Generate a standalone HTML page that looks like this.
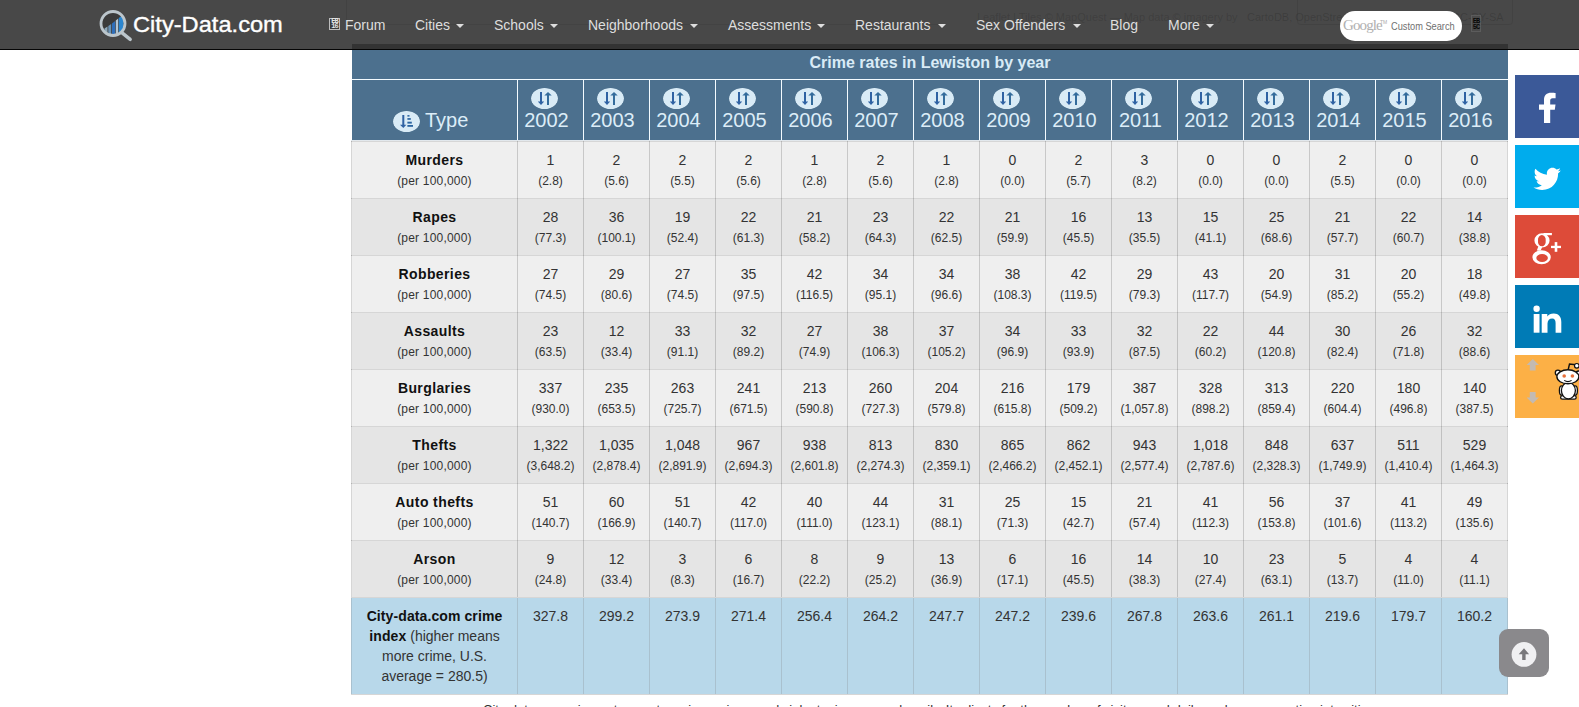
<!DOCTYPE html><html><head><meta charset="utf-8"><style>
html,body{margin:0;padding:0;}
body{width:1579px;height:707px;overflow:hidden;position:relative;background:#fff;font-family:"Liberation Sans",sans-serif;}
#nav{position:absolute;left:0;top:0;width:1579px;height:49px;background:#484848;border-bottom:1px solid #050505;color:#dedede;font-size:14px;}
#nav .it{position:absolute;top:18px;line-height:14px;white-space:nowrap;}
#nav .car{position:absolute;top:24px;width:0;height:0;border-top:4px solid #dedede;border-left:4px solid transparent;border-right:4px solid transparent;}
#logo{position:absolute;left:133px;top:14px;font-size:22px;line-height:22px;color:#fff;white-space:nowrap;-webkit-text-stroke:0.35px #fff;transform:scaleX(1.075);transform-origin:0 0;}
#search{position:absolute;left:1340px;top:11px;width:122px;height:30px;border-radius:15px;background:#fff;}
#band{position:absolute;left:352px;top:44px;width:1156px;height:5px;background:#333;}
#cap{position:absolute;left:352px;top:50px;width:1156px;height:29px;background:#4c708e;color:#d9ebf6;font-weight:bold;font-size:16px;line-height:25px;text-align:center;}
#capline{position:absolute;left:351px;top:79px;width:1157px;height:1px;background:#f4fbff;}
#head{position:absolute;left:352px;top:80px;width:1156px;height:60px;background:#4c708e;color:#dcedf8;}
#headline{position:absolute;left:351px;top:140px;width:1157px;height:1px;background:#e2e8ed;}
.wv{position:absolute;top:0;width:1px;height:60px;background:#f4fbff;}
.yh{position:absolute;top:0;width:66px;height:60px;}
.pill{position:absolute;width:27px;height:21px;border-radius:50%;background:#d9ebf6;}
.yh .pill{left:14px;top:8px;}
.yt{position:absolute;left:0;width:59px;top:30px;line-height:20px;font-size:20px;text-align:center;}
#tpill{left:41px;top:30px;}
#ttxt{position:absolute;left:73px;top:30px;line-height:20px;font-size:20px;}
.row{position:absolute;left:352px;width:1155px;height:56px;}
.odd{background:#efefef;}
.even{background:#e5e5e5;}
.idx{height:96px;background:#b8d8ea;}
.cell{position:absolute;top:0;width:65px;height:48px;padding-top:8px;text-align:center;line-height:20px;font-size:14px;color:#333;}
.lab{color:#333;}
.lab b{color:#111;letter-spacing:0.4px;}
.lab .sub{letter-spacing:0.2px;}
.idx .lab{width:149px!important;padding-left:8px;padding-right:8px;}
.idx .lab b{letter-spacing:0.1px;}
.sub{font-size:12px;}
.gh{position:absolute;left:351px;width:1157px;height:1px;background:rgba(0,0,0,0.16);}
.gv{position:absolute;top:141px;height:456px;width:1px;background:rgba(0,0,0,0.16);}
.gvi{position:absolute;top:598px;height:96px;width:1px;background:#a9c1cf;}
.soc{position:absolute;left:1515px;width:64px;height:63px;}
#totop{position:absolute;left:1499px;top:629px;width:50px;height:48px;border-radius:9px;background:#8a898c;}
#foot{position:absolute;left:483px;top:703px;font-size:13px;line-height:13px;color:#333;white-space:nowrap;}

</style></head><body>
<div id="nav">
<div style="position:absolute;left:977px;top:12px;font-size:11px;line-height:11px;color:rgba(0,0,0,0.14);white-space:nowrap">Leaflet | Tiles &copy; MapQuest &mdash; Map data &copy; imagery by</div><div style="position:absolute;left:1247px;top:12px;font-size:11px;line-height:11px;color:rgba(0,0,0,0.16);white-space:nowrap">CartoDB, OpenStreetMap</div><div style="position:absolute;left:1452px;top:12px;font-size:11px;line-height:11px;color:rgba(0,0,0,0.16);white-space:nowrap">CC-BY-SA</div><div style="position:absolute;left:1297px;top:0;width:216px;height:25px;border:1px solid rgba(0,0,0,0.07);border-top:none;box-sizing:border-box;border-radius:0 0 4px 4px"></div><div style="position:absolute;left:346px;top:0;width:1px;height:25px;background:rgba(0,0,0,0.07)"></div><div style="position:absolute;left:346px;top:24px;width:600px;height:1px;background:rgba(0,0,0,0.06)"></div><svg style="position:absolute;left:98px;top:8px" width="36" height="34" viewBox="0 0 36 34">
<defs><clipPath id="lc"><circle cx="15" cy="15.5" r="11.5"/></clipPath></defs>
<circle cx="15" cy="15.5" r="12" fill="#3b3b3b"/>
<g clip-path="url(#lc)">
<path d="M6.5 28 V20.5 L9.5 18.6 V28 Z" fill="#8ea9bb"/>
<path d="M10.3 28 V18.1 L13.2 16 V28 Z" fill="#6b93b5"/>
<path d="M14 28 V15.4 L17.2 12.9 V28 Z" fill="#2f6fba"/>
<path d="M17.8 28 V12.4 L20.2 10.5 V28 Z" fill="#b3c6d4"/>
<path d="M20.8 28 V10 L25.5 6.5 V28 Z" fill="#2a86d0"/>
</g>
<circle cx="15" cy="15.5" r="12" fill="none" stroke="#bcc6cc" stroke-width="2.8"/>
<path d="M23.8 24.6 L32.2 31.4" stroke="#bcc6cc" stroke-width="3.4" stroke-linecap="round"/>
</svg>
<div id="logo">City-Data.com</div>
<div style="position:absolute;left:329px;top:18px;width:11px;height:12px;border:1px solid #bdbdbd;box-sizing:border-box;background:#3c3c3c;font-family:'Liberation Mono',monospace;font-size:7px;line-height:5px;color:#e6e6e6;font-weight:bold;text-align:center;padding-top:0px;letter-spacing:-1px">EB<br>16</div>
<div class="it" style="left:345px">Forum</div>
<div class="it" style="left:415px">Cities</div><div class="car" style="left:456px"></div>
<div class="it" style="left:494px">Schools</div><div class="car" style="left:550px"></div>
<div class="it" style="left:588px">Neighborhoods</div><div class="car" style="left:690px"></div>
<div class="it" style="left:728px">Assessments</div><div class="car" style="left:817px"></div>
<div class="it" style="left:855px">Restaurants</div><div class="car" style="left:938px"></div>
<div class="it" style="left:976px">Sex Offenders</div><div class="car" style="left:1073px"></div>
<div class="it" style="left:1110px">Blog</div>
<div class="it" style="left:1168px">More</div><div class="car" style="left:1206px"></div>
<div id="search"><span style="position:absolute;left:3px;top:7px;font-family:'Liberation Serif',serif;font-size:15px;line-height:15px;color:#b0b0b0;letter-spacing:-0.9px;white-space:nowrap">Google</span><span style="position:absolute;left:40px;top:9px;font-size:5px;line-height:5px;color:#aaa">TM</span><span style="position:absolute;left:51px;top:9.5px;font-size:11px;line-height:11px;color:#707070;white-space:nowrap;transform:scaleX(0.84);transform-origin:0 0">Custom Search</span></div>
<div style="position:absolute;left:1471px;top:15px;width:10px;height:17px;background:#4a4a4a;border:1px solid #5c5c5c;box-sizing:border-box;font-family:'Liberation Mono',monospace;font-size:7px;line-height:6px;color:#080808;font-weight:bold;text-align:center;padding-top:2px;letter-spacing:-1px">EB<br>5C</div>

</div>
<div id="band"></div>
<div id="cap">Crime rates in Lewiston by year</div>
<div id="capline"></div>
<div id="head">
<svg class="pill" id="tpill" viewBox="0 0 27 21" width="27" height="21" style="background:none;top:31px"><rect x="0" y="0" width="27" height="21" rx="12" ry="10.5" fill="#d9ebf6"/><rect x="9.3" y="4" width="2" height="11" fill="#2f62a3"/><path d="M7 13.8 H13.4 L10.3 17 Z" fill="#2f62a3"/><rect x="14.4" y="4.1" width="2.1" height="1.5" fill="#2a64a0"/><rect x="14.4" y="7.1" width="3.4" height="1.7" fill="#2a64a0"/><rect x="14.4" y="10.7" width="4.4" height="1.9" fill="#2a64a0"/><rect x="14.4" y="14" width="5.6" height="1.8" fill="#2a64a0"/></svg><span id="ttxt">Type</span>

<div class="yh" style="left:165px"><svg class="pill" viewBox="0 0 27 21" width="27" height="21" style="background:none"><rect x="0" y="0" width="27" height="21" rx="12" ry="10.5" fill="#d9ebf6"/><rect x="9" y="4" width="2" height="11" fill="#2f62a3"/><path d="M6.8 13.6 H13.2 L10 17 Z" fill="#2f62a3"/><rect x="16" y="6.5" width="2" height="10.5" fill="#346c9c"/><path d="M13.3 7.6 H20.7 L17 4 Z" fill="#346c9c"/></svg>
<span class="yt">2002</span></div>
<div class="yh" style="left:231px"><svg class="pill" viewBox="0 0 27 21" width="27" height="21" style="background:none"><rect x="0" y="0" width="27" height="21" rx="12" ry="10.5" fill="#d9ebf6"/><rect x="9" y="4" width="2" height="11" fill="#2f62a3"/><path d="M6.8 13.6 H13.2 L10 17 Z" fill="#2f62a3"/><rect x="16" y="6.5" width="2" height="10.5" fill="#346c9c"/><path d="M13.3 7.6 H20.7 L17 4 Z" fill="#346c9c"/></svg>
<span class="yt">2003</span></div>
<div class="yh" style="left:297px"><svg class="pill" viewBox="0 0 27 21" width="27" height="21" style="background:none"><rect x="0" y="0" width="27" height="21" rx="12" ry="10.5" fill="#d9ebf6"/><rect x="9" y="4" width="2" height="11" fill="#2f62a3"/><path d="M6.8 13.6 H13.2 L10 17 Z" fill="#2f62a3"/><rect x="16" y="6.5" width="2" height="10.5" fill="#346c9c"/><path d="M13.3 7.6 H20.7 L17 4 Z" fill="#346c9c"/></svg>
<span class="yt">2004</span></div>
<div class="yh" style="left:363px"><svg class="pill" viewBox="0 0 27 21" width="27" height="21" style="background:none"><rect x="0" y="0" width="27" height="21" rx="12" ry="10.5" fill="#d9ebf6"/><rect x="9" y="4" width="2" height="11" fill="#2f62a3"/><path d="M6.8 13.6 H13.2 L10 17 Z" fill="#2f62a3"/><rect x="16" y="6.5" width="2" height="10.5" fill="#346c9c"/><path d="M13.3 7.6 H20.7 L17 4 Z" fill="#346c9c"/></svg>
<span class="yt">2005</span></div>
<div class="yh" style="left:429px"><svg class="pill" viewBox="0 0 27 21" width="27" height="21" style="background:none"><rect x="0" y="0" width="27" height="21" rx="12" ry="10.5" fill="#d9ebf6"/><rect x="9" y="4" width="2" height="11" fill="#2f62a3"/><path d="M6.8 13.6 H13.2 L10 17 Z" fill="#2f62a3"/><rect x="16" y="6.5" width="2" height="10.5" fill="#346c9c"/><path d="M13.3 7.6 H20.7 L17 4 Z" fill="#346c9c"/></svg>
<span class="yt">2006</span></div>
<div class="yh" style="left:495px"><svg class="pill" viewBox="0 0 27 21" width="27" height="21" style="background:none"><rect x="0" y="0" width="27" height="21" rx="12" ry="10.5" fill="#d9ebf6"/><rect x="9" y="4" width="2" height="11" fill="#2f62a3"/><path d="M6.8 13.6 H13.2 L10 17 Z" fill="#2f62a3"/><rect x="16" y="6.5" width="2" height="10.5" fill="#346c9c"/><path d="M13.3 7.6 H20.7 L17 4 Z" fill="#346c9c"/></svg>
<span class="yt">2007</span></div>
<div class="yh" style="left:561px"><svg class="pill" viewBox="0 0 27 21" width="27" height="21" style="background:none"><rect x="0" y="0" width="27" height="21" rx="12" ry="10.5" fill="#d9ebf6"/><rect x="9" y="4" width="2" height="11" fill="#2f62a3"/><path d="M6.8 13.6 H13.2 L10 17 Z" fill="#2f62a3"/><rect x="16" y="6.5" width="2" height="10.5" fill="#346c9c"/><path d="M13.3 7.6 H20.7 L17 4 Z" fill="#346c9c"/></svg>
<span class="yt">2008</span></div>
<div class="yh" style="left:627px"><svg class="pill" viewBox="0 0 27 21" width="27" height="21" style="background:none"><rect x="0" y="0" width="27" height="21" rx="12" ry="10.5" fill="#d9ebf6"/><rect x="9" y="4" width="2" height="11" fill="#2f62a3"/><path d="M6.8 13.6 H13.2 L10 17 Z" fill="#2f62a3"/><rect x="16" y="6.5" width="2" height="10.5" fill="#346c9c"/><path d="M13.3 7.6 H20.7 L17 4 Z" fill="#346c9c"/></svg>
<span class="yt">2009</span></div>
<div class="yh" style="left:693px"><svg class="pill" viewBox="0 0 27 21" width="27" height="21" style="background:none"><rect x="0" y="0" width="27" height="21" rx="12" ry="10.5" fill="#d9ebf6"/><rect x="9" y="4" width="2" height="11" fill="#2f62a3"/><path d="M6.8 13.6 H13.2 L10 17 Z" fill="#2f62a3"/><rect x="16" y="6.5" width="2" height="10.5" fill="#346c9c"/><path d="M13.3 7.6 H20.7 L17 4 Z" fill="#346c9c"/></svg>
<span class="yt">2010</span></div>
<div class="yh" style="left:759px"><svg class="pill" viewBox="0 0 27 21" width="27" height="21" style="background:none"><rect x="0" y="0" width="27" height="21" rx="12" ry="10.5" fill="#d9ebf6"/><rect x="9" y="4" width="2" height="11" fill="#2f62a3"/><path d="M6.8 13.6 H13.2 L10 17 Z" fill="#2f62a3"/><rect x="16" y="6.5" width="2" height="10.5" fill="#346c9c"/><path d="M13.3 7.6 H20.7 L17 4 Z" fill="#346c9c"/></svg>
<span class="yt">2011</span></div>
<div class="yh" style="left:825px"><svg class="pill" viewBox="0 0 27 21" width="27" height="21" style="background:none"><rect x="0" y="0" width="27" height="21" rx="12" ry="10.5" fill="#d9ebf6"/><rect x="9" y="4" width="2" height="11" fill="#2f62a3"/><path d="M6.8 13.6 H13.2 L10 17 Z" fill="#2f62a3"/><rect x="16" y="6.5" width="2" height="10.5" fill="#346c9c"/><path d="M13.3 7.6 H20.7 L17 4 Z" fill="#346c9c"/></svg>
<span class="yt">2012</span></div>
<div class="yh" style="left:891px"><svg class="pill" viewBox="0 0 27 21" width="27" height="21" style="background:none"><rect x="0" y="0" width="27" height="21" rx="12" ry="10.5" fill="#d9ebf6"/><rect x="9" y="4" width="2" height="11" fill="#2f62a3"/><path d="M6.8 13.6 H13.2 L10 17 Z" fill="#2f62a3"/><rect x="16" y="6.5" width="2" height="10.5" fill="#346c9c"/><path d="M13.3 7.6 H20.7 L17 4 Z" fill="#346c9c"/></svg>
<span class="yt">2013</span></div>
<div class="yh" style="left:957px"><svg class="pill" viewBox="0 0 27 21" width="27" height="21" style="background:none"><rect x="0" y="0" width="27" height="21" rx="12" ry="10.5" fill="#d9ebf6"/><rect x="9" y="4" width="2" height="11" fill="#2f62a3"/><path d="M6.8 13.6 H13.2 L10 17 Z" fill="#2f62a3"/><rect x="16" y="6.5" width="2" height="10.5" fill="#346c9c"/><path d="M13.3 7.6 H20.7 L17 4 Z" fill="#346c9c"/></svg>
<span class="yt">2014</span></div>
<div class="yh" style="left:1023px"><svg class="pill" viewBox="0 0 27 21" width="27" height="21" style="background:none"><rect x="0" y="0" width="27" height="21" rx="12" ry="10.5" fill="#d9ebf6"/><rect x="9" y="4" width="2" height="11" fill="#2f62a3"/><path d="M6.8 13.6 H13.2 L10 17 Z" fill="#2f62a3"/><rect x="16" y="6.5" width="2" height="10.5" fill="#346c9c"/><path d="M13.3 7.6 H20.7 L17 4 Z" fill="#346c9c"/></svg>
<span class="yt">2015</span></div>
<div class="yh" style="left:1089px"><svg class="pill" viewBox="0 0 27 21" width="27" height="21" style="background:none"><rect x="0" y="0" width="27" height="21" rx="12" ry="10.5" fill="#d9ebf6"/><rect x="9" y="4" width="2" height="11" fill="#2f62a3"/><path d="M6.8 13.6 H13.2 L10 17 Z" fill="#2f62a3"/><rect x="16" y="6.5" width="2" height="10.5" fill="#346c9c"/><path d="M13.3 7.6 H20.7 L17 4 Z" fill="#346c9c"/></svg>
<span class="yt">2016</span></div>
<div class="wv" style="left:165px"></div>
<div class="wv" style="left:231px"></div>
<div class="wv" style="left:297px"></div>
<div class="wv" style="left:363px"></div>
<div class="wv" style="left:429px"></div>
<div class="wv" style="left:495px"></div>
<div class="wv" style="left:561px"></div>
<div class="wv" style="left:627px"></div>
<div class="wv" style="left:693px"></div>
<div class="wv" style="left:759px"></div>
<div class="wv" style="left:825px"></div>
<div class="wv" style="left:891px"></div>
<div class="wv" style="left:957px"></div>
<div class="wv" style="left:1023px"></div>
<div class="wv" style="left:1089px"></div>
</div>
<div id="headline"></div>
<div class="row odd" style="top:142px">
<div class="cell lab" style="left:0;width:165px"><b>Murders</b><br><span class="sub">(per 100,000)</span></div>
<div class="cell" style="left:166px">1<br><span class="sub">(2.8)</span></div>
<div class="cell" style="left:232px">2<br><span class="sub">(5.6)</span></div>
<div class="cell" style="left:298px">2<br><span class="sub">(5.5)</span></div>
<div class="cell" style="left:364px">2<br><span class="sub">(5.6)</span></div>
<div class="cell" style="left:430px">1<br><span class="sub">(2.8)</span></div>
<div class="cell" style="left:496px">2<br><span class="sub">(5.6)</span></div>
<div class="cell" style="left:562px">1<br><span class="sub">(2.8)</span></div>
<div class="cell" style="left:628px">0<br><span class="sub">(0.0)</span></div>
<div class="cell" style="left:694px">2<br><span class="sub">(5.7)</span></div>
<div class="cell" style="left:760px">3<br><span class="sub">(8.2)</span></div>
<div class="cell" style="left:826px">0<br><span class="sub">(0.0)</span></div>
<div class="cell" style="left:892px">0<br><span class="sub">(0.0)</span></div>
<div class="cell" style="left:958px">2<br><span class="sub">(5.5)</span></div>
<div class="cell" style="left:1024px">0<br><span class="sub">(0.0)</span></div>
<div class="cell" style="left:1090px">0<br><span class="sub">(0.0)</span></div>
</div>
<div class="row even" style="top:199px">
<div class="cell lab" style="left:0;width:165px"><b>Rapes</b><br><span class="sub">(per 100,000)</span></div>
<div class="cell" style="left:166px">28<br><span class="sub">(77.3)</span></div>
<div class="cell" style="left:232px">36<br><span class="sub">(100.1)</span></div>
<div class="cell" style="left:298px">19<br><span class="sub">(52.4)</span></div>
<div class="cell" style="left:364px">22<br><span class="sub">(61.3)</span></div>
<div class="cell" style="left:430px">21<br><span class="sub">(58.2)</span></div>
<div class="cell" style="left:496px">23<br><span class="sub">(64.3)</span></div>
<div class="cell" style="left:562px">22<br><span class="sub">(62.5)</span></div>
<div class="cell" style="left:628px">21<br><span class="sub">(59.9)</span></div>
<div class="cell" style="left:694px">16<br><span class="sub">(45.5)</span></div>
<div class="cell" style="left:760px">13<br><span class="sub">(35.5)</span></div>
<div class="cell" style="left:826px">15<br><span class="sub">(41.1)</span></div>
<div class="cell" style="left:892px">25<br><span class="sub">(68.6)</span></div>
<div class="cell" style="left:958px">21<br><span class="sub">(57.7)</span></div>
<div class="cell" style="left:1024px">22<br><span class="sub">(60.7)</span></div>
<div class="cell" style="left:1090px">14<br><span class="sub">(38.8)</span></div>
</div>
<div class="row odd" style="top:256px">
<div class="cell lab" style="left:0;width:165px"><b>Robberies</b><br><span class="sub">(per 100,000)</span></div>
<div class="cell" style="left:166px">27<br><span class="sub">(74.5)</span></div>
<div class="cell" style="left:232px">29<br><span class="sub">(80.6)</span></div>
<div class="cell" style="left:298px">27<br><span class="sub">(74.5)</span></div>
<div class="cell" style="left:364px">35<br><span class="sub">(97.5)</span></div>
<div class="cell" style="left:430px">42<br><span class="sub">(116.5)</span></div>
<div class="cell" style="left:496px">34<br><span class="sub">(95.1)</span></div>
<div class="cell" style="left:562px">34<br><span class="sub">(96.6)</span></div>
<div class="cell" style="left:628px">38<br><span class="sub">(108.3)</span></div>
<div class="cell" style="left:694px">42<br><span class="sub">(119.5)</span></div>
<div class="cell" style="left:760px">29<br><span class="sub">(79.3)</span></div>
<div class="cell" style="left:826px">43<br><span class="sub">(117.7)</span></div>
<div class="cell" style="left:892px">20<br><span class="sub">(54.9)</span></div>
<div class="cell" style="left:958px">31<br><span class="sub">(85.2)</span></div>
<div class="cell" style="left:1024px">20<br><span class="sub">(55.2)</span></div>
<div class="cell" style="left:1090px">18<br><span class="sub">(49.8)</span></div>
</div>
<div class="row even" style="top:313px">
<div class="cell lab" style="left:0;width:165px"><b>Assaults</b><br><span class="sub">(per 100,000)</span></div>
<div class="cell" style="left:166px">23<br><span class="sub">(63.5)</span></div>
<div class="cell" style="left:232px">12<br><span class="sub">(33.4)</span></div>
<div class="cell" style="left:298px">33<br><span class="sub">(91.1)</span></div>
<div class="cell" style="left:364px">32<br><span class="sub">(89.2)</span></div>
<div class="cell" style="left:430px">27<br><span class="sub">(74.9)</span></div>
<div class="cell" style="left:496px">38<br><span class="sub">(106.3)</span></div>
<div class="cell" style="left:562px">37<br><span class="sub">(105.2)</span></div>
<div class="cell" style="left:628px">34<br><span class="sub">(96.9)</span></div>
<div class="cell" style="left:694px">33<br><span class="sub">(93.9)</span></div>
<div class="cell" style="left:760px">32<br><span class="sub">(87.5)</span></div>
<div class="cell" style="left:826px">22<br><span class="sub">(60.2)</span></div>
<div class="cell" style="left:892px">44<br><span class="sub">(120.8)</span></div>
<div class="cell" style="left:958px">30<br><span class="sub">(82.4)</span></div>
<div class="cell" style="left:1024px">26<br><span class="sub">(71.8)</span></div>
<div class="cell" style="left:1090px">32<br><span class="sub">(88.6)</span></div>
</div>
<div class="row odd" style="top:370px">
<div class="cell lab" style="left:0;width:165px"><b>Burglaries</b><br><span class="sub">(per 100,000)</span></div>
<div class="cell" style="left:166px">337<br><span class="sub">(930.0)</span></div>
<div class="cell" style="left:232px">235<br><span class="sub">(653.5)</span></div>
<div class="cell" style="left:298px">263<br><span class="sub">(725.7)</span></div>
<div class="cell" style="left:364px">241<br><span class="sub">(671.5)</span></div>
<div class="cell" style="left:430px">213<br><span class="sub">(590.8)</span></div>
<div class="cell" style="left:496px">260<br><span class="sub">(727.3)</span></div>
<div class="cell" style="left:562px">204<br><span class="sub">(579.8)</span></div>
<div class="cell" style="left:628px">216<br><span class="sub">(615.8)</span></div>
<div class="cell" style="left:694px">179<br><span class="sub">(509.2)</span></div>
<div class="cell" style="left:760px">387<br><span class="sub">(1,057.8)</span></div>
<div class="cell" style="left:826px">328<br><span class="sub">(898.2)</span></div>
<div class="cell" style="left:892px">313<br><span class="sub">(859.4)</span></div>
<div class="cell" style="left:958px">220<br><span class="sub">(604.4)</span></div>
<div class="cell" style="left:1024px">180<br><span class="sub">(496.8)</span></div>
<div class="cell" style="left:1090px">140<br><span class="sub">(387.5)</span></div>
</div>
<div class="row even" style="top:427px">
<div class="cell lab" style="left:0;width:165px"><b>Thefts</b><br><span class="sub">(per 100,000)</span></div>
<div class="cell" style="left:166px">1,322<br><span class="sub">(3,648.2)</span></div>
<div class="cell" style="left:232px">1,035<br><span class="sub">(2,878.4)</span></div>
<div class="cell" style="left:298px">1,048<br><span class="sub">(2,891.9)</span></div>
<div class="cell" style="left:364px">967<br><span class="sub">(2,694.3)</span></div>
<div class="cell" style="left:430px">938<br><span class="sub">(2,601.8)</span></div>
<div class="cell" style="left:496px">813<br><span class="sub">(2,274.3)</span></div>
<div class="cell" style="left:562px">830<br><span class="sub">(2,359.1)</span></div>
<div class="cell" style="left:628px">865<br><span class="sub">(2,466.2)</span></div>
<div class="cell" style="left:694px">862<br><span class="sub">(2,452.1)</span></div>
<div class="cell" style="left:760px">943<br><span class="sub">(2,577.4)</span></div>
<div class="cell" style="left:826px">1,018<br><span class="sub">(2,787.6)</span></div>
<div class="cell" style="left:892px">848<br><span class="sub">(2,328.3)</span></div>
<div class="cell" style="left:958px">637<br><span class="sub">(1,749.9)</span></div>
<div class="cell" style="left:1024px">511<br><span class="sub">(1,410.4)</span></div>
<div class="cell" style="left:1090px">529<br><span class="sub">(1,464.3)</span></div>
</div>
<div class="row odd" style="top:484px">
<div class="cell lab" style="left:0;width:165px"><b>Auto thefts</b><br><span class="sub">(per 100,000)</span></div>
<div class="cell" style="left:166px">51<br><span class="sub">(140.7)</span></div>
<div class="cell" style="left:232px">60<br><span class="sub">(166.9)</span></div>
<div class="cell" style="left:298px">51<br><span class="sub">(140.7)</span></div>
<div class="cell" style="left:364px">42<br><span class="sub">(117.0)</span></div>
<div class="cell" style="left:430px">40<br><span class="sub">(111.0)</span></div>
<div class="cell" style="left:496px">44<br><span class="sub">(123.1)</span></div>
<div class="cell" style="left:562px">31<br><span class="sub">(88.1)</span></div>
<div class="cell" style="left:628px">25<br><span class="sub">(71.3)</span></div>
<div class="cell" style="left:694px">15<br><span class="sub">(42.7)</span></div>
<div class="cell" style="left:760px">21<br><span class="sub">(57.4)</span></div>
<div class="cell" style="left:826px">41<br><span class="sub">(112.3)</span></div>
<div class="cell" style="left:892px">56<br><span class="sub">(153.8)</span></div>
<div class="cell" style="left:958px">37<br><span class="sub">(101.6)</span></div>
<div class="cell" style="left:1024px">41<br><span class="sub">(113.2)</span></div>
<div class="cell" style="left:1090px">49<br><span class="sub">(135.6)</span></div>
</div>
<div class="row even" style="top:541px">
<div class="cell lab" style="left:0;width:165px"><b>Arson</b><br><span class="sub">(per 100,000)</span></div>
<div class="cell" style="left:166px">9<br><span class="sub">(24.8)</span></div>
<div class="cell" style="left:232px">12<br><span class="sub">(33.4)</span></div>
<div class="cell" style="left:298px">3<br><span class="sub">(8.3)</span></div>
<div class="cell" style="left:364px">6<br><span class="sub">(16.7)</span></div>
<div class="cell" style="left:430px">8<br><span class="sub">(22.2)</span></div>
<div class="cell" style="left:496px">9<br><span class="sub">(25.2)</span></div>
<div class="cell" style="left:562px">13<br><span class="sub">(36.9)</span></div>
<div class="cell" style="left:628px">6<br><span class="sub">(17.1)</span></div>
<div class="cell" style="left:694px">16<br><span class="sub">(45.5)</span></div>
<div class="cell" style="left:760px">14<br><span class="sub">(38.3)</span></div>
<div class="cell" style="left:826px">10<br><span class="sub">(27.4)</span></div>
<div class="cell" style="left:892px">23<br><span class="sub">(63.1)</span></div>
<div class="cell" style="left:958px">5<br><span class="sub">(13.7)</span></div>
<div class="cell" style="left:1024px">4<br><span class="sub">(11.0)</span></div>
<div class="cell" style="left:1090px">4<br><span class="sub">(11.1)</span></div>
</div>
<div class="row idx" style="top:598px">
<div class="cell lab" style="left:0;width:165px"><b>City-data.com crime index</b> (higher means more crime, U.S. average = 280.5)</div>
<div class="cell" style="left:166px">327.8</div>
<div class="cell" style="left:232px">299.2</div>
<div class="cell" style="left:298px">273.9</div>
<div class="cell" style="left:364px">271.4</div>
<div class="cell" style="left:430px">256.4</div>
<div class="cell" style="left:496px">264.2</div>
<div class="cell" style="left:562px">247.7</div>
<div class="cell" style="left:628px">247.2</div>
<div class="cell" style="left:694px">239.6</div>
<div class="cell" style="left:760px">267.8</div>
<div class="cell" style="left:826px">263.6</div>
<div class="cell" style="left:892px">261.1</div>
<div class="cell" style="left:958px">219.6</div>
<div class="cell" style="left:1024px">179.7</div>
<div class="cell" style="left:1090px">160.2</div>
</div>
<div class="gh" style="top:141px"></div>
<div class="gh" style="top:198px"></div>
<div class="gh" style="top:255px"></div>
<div class="gh" style="top:312px"></div>
<div class="gh" style="top:369px"></div>
<div class="gh" style="top:426px"></div>
<div class="gh" style="top:483px"></div>
<div class="gh" style="top:540px"></div>
<div class="gh" style="top:597px"></div>
<div class="gh" style="top:694px"></div>
<div class="gv" style="left:351px"></div>
<div class="gvi" style="left:351px"></div>
<div class="gv" style="left:517px"></div>
<div class="gvi" style="left:517px"></div>
<div class="gv" style="left:583px"></div>
<div class="gvi" style="left:583px"></div>
<div class="gv" style="left:649px"></div>
<div class="gvi" style="left:649px"></div>
<div class="gv" style="left:715px"></div>
<div class="gvi" style="left:715px"></div>
<div class="gv" style="left:781px"></div>
<div class="gvi" style="left:781px"></div>
<div class="gv" style="left:847px"></div>
<div class="gvi" style="left:847px"></div>
<div class="gv" style="left:913px"></div>
<div class="gvi" style="left:913px"></div>
<div class="gv" style="left:979px"></div>
<div class="gvi" style="left:979px"></div>
<div class="gv" style="left:1045px"></div>
<div class="gvi" style="left:1045px"></div>
<div class="gv" style="left:1111px"></div>
<div class="gvi" style="left:1111px"></div>
<div class="gv" style="left:1177px"></div>
<div class="gvi" style="left:1177px"></div>
<div class="gv" style="left:1243px"></div>
<div class="gvi" style="left:1243px"></div>
<div class="gv" style="left:1309px"></div>
<div class="gvi" style="left:1309px"></div>
<div class="gv" style="left:1375px"></div>
<div class="gvi" style="left:1375px"></div>
<div class="gv" style="left:1441px"></div>
<div class="gvi" style="left:1441px"></div>
<div class="gv" style="left:1507px"></div>
<div class="gvi" style="left:1507px"></div>
<div class="soc" style="top:75px;background:#3b5998"><svg width="64" height="63"><path d="M29 48.1 V34.8 H24 V29.4 H29 V25 C29 20.3 31.8 17.8 36.2 17.8 C38.2 17.8 39.8 18 40.6 18.1 V23.2 H37.6 C35.8 23.2 35.2 24.1 35.2 25.6 V29.4 H40.5 L39.8 34.8 H35.2 V48.1 Z" fill="#fff"/></svg></div>
<div class="soc" style="top:145px;background:#00aced"><svg width="64" height="63"><g transform="translate(18.5,20.2) scale(0.0535)"><path d="M459.37 151.716c.325 4.548.325 9.097.325 13.645 0 138.72-105.583 298.558-298.558 298.558-59.452 0-114.68-17.219-161.137-47.106 8.447.974 16.568 1.299 25.34 1.299 49.055 0 94.213-16.568 130.274-44.832-46.132-.975-84.792-31.188-98.112-72.772 6.498.974 12.995 1.624 19.818 1.624 9.421 0 18.843-1.3 27.614-3.573-48.081-9.747-84.143-51.98-84.143-102.985v-1.299c13.969 7.797 30.214 12.67 47.431 13.319-28.264-18.843-46.781-51.005-46.781-87.391 0-19.492 5.197-37.36 14.294-52.954 51.655 63.675 129.3 105.258 216.365 109.807-1.624-7.797-2.599-15.918-2.599-24.04 0-57.828 46.782-104.934 104.934-104.934 30.213 0 57.502 12.67 76.67 33.137 23.715-4.548 46.456-13.32 66.599-25.34-7.798 24.366-22.742 44.833-42.236 59.452 18.843-1.624 37.36-6.822 54.253-14.944-12.67 18.843-28.264 35.735-46.781 49.704z" fill="#fff"/></g></svg></div>
<div class="soc" style="top:215px;background:#dd4b39"><svg width="64" height="63">
<path fill="#fff" fill-rule="evenodd" d="M19.4 25.4 A7.6 7.1 0 1 0 34.6 25.4 A7.6 7.1 0 1 0 19.4 25.4 Z M23 25.7 A3.9 4.9 0 1 0 30.7 25.7 A3.9 4.9 0 1 0 23 25.7 Z"/>
<rect x="28.4" y="18" width="8.5" height="2.2" fill="#fff"/>
<path fill="#fff" d="M23.5 31 L27.5 31.5 L25.5 35.8 L21.8 35.5 Z"/>
<path fill="#fff" fill-rule="evenodd" d="M17.4 42.2 A9.2 7 0 1 0 35.8 42.2 A9.2 7 0 1 0 17.4 42.2 Z M21.3 43 A5.8 4 0 1 0 32.9 43 A5.8 4 0 1 0 21.3 43 Z"/>
<rect x="36" y="30.8" width="10" height="2.3" fill="#fff"/><rect x="39.7" y="27.1" width="2.6" height="9.7" fill="#fff"/>
</svg></div>
<div class="soc" style="top:285px;background:#007bb6"><svg width="64" height="63"><circle cx="21.6" cy="23.8" r="3.2" fill="#fff"/><rect x="18.7" y="29" width="5.8" height="18.7" fill="#fff"/><path d="M26.7 29 H32.3 V31.6 C33.6 29.8 35.6 28.5 38.8 28.5 C43.5 28.5 46.3 31.5 46.3 37 V47.7 H40.6 V38 C40.6 35.3 39.6 33.6 37.2 33.6 C34.5 33.6 32.5 35.5 32.5 38.6 V47.7 H26.7 Z" fill="#fff"/></svg></div>
<div class="soc" style="top:355px;background:#fcb046"><svg width="64" height="63">
<path d="M17.8 4 L11.6 10 H14.8 V15.6 H20.6 V10 H24 Z" fill="#b9bcc6" opacity="0.85"/>
<path d="M17.8 48.6 L11.6 42.6 H14.8 V37 H20.6 V42.6 H24 Z" fill="#b9bcc6" opacity="0.85"/>
<path d="M53.1 15 L54.5 9 L60.9 9.7" stroke="#111" stroke-width="1.4" fill="none"/><circle cx="61.8" cy="10.8" r="2.3" fill="#fff" stroke="#111" stroke-width="1.2"/>
<circle cx="42.9" cy="17.8" r="2.6" fill="#fff" stroke="#111" stroke-width="1.3"/>
<circle cx="63.6" cy="18.6" r="2.6" fill="#fff" stroke="#111" stroke-width="1.3"/>
<ellipse cx="46.6" cy="35.5" rx="2.2" ry="4.6" fill="#fff" stroke="#111" stroke-width="1.3"/><ellipse cx="60.2" cy="35.5" rx="2.2" ry="4.6" fill="#fff" stroke="#111" stroke-width="1.3"/>
<rect x="45.6" y="40.6" width="15.6" height="3.6" rx="1.8" fill="#fff" stroke="#111" stroke-width="1.3"/>
<ellipse cx="53.4" cy="35.6" rx="7" ry="8.2" fill="#fff" stroke="#111" stroke-width="1.3"/>
<ellipse cx="52.9" cy="21.8" rx="11" ry="7" fill="#fff" stroke="#111" stroke-width="1.4"/>
<circle cx="49.2" cy="21" r="1.8" fill="#e8703a"/><circle cx="57.4" cy="21" r="1.8" fill="#e8703a"/>
<path d="M49.2 25.4 Q52.9 27.8 56.6 25.4" stroke="#111" stroke-width="1.1" fill="none"/>
</svg></div>
<div id="totop"><svg width="50" height="48"><circle cx="25" cy="25.4" r="12.4" fill="#f0f0f2"/><path d="M25 19.2 L30.1 25.2 H26.6 V31.1 H23.2 V25.2 H19.7 Z" fill="#78777b"/></svg></div>

<div id="foot">City-data.com crime rate counts serious crimes and violent crimes more heavily. It adjusts for the number of visitors and daily workers commuting into cities.</div>
</body></html>
